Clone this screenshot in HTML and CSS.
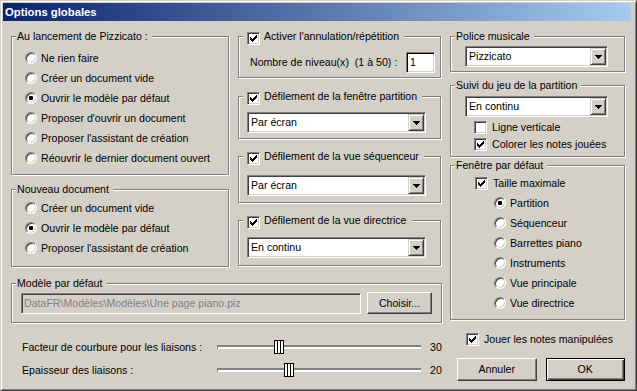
FILE: index.html
```html
<!DOCTYPE html>
<html lang="fr">
<head>
    <meta charset="UTF-8">
    <title>Options globales</title>
    <link rel="stylesheet" href="styles.css">
</head>
<body>
    <div class="window">
        <div class="titlebar">Options globales</div>
        <div class="client">
            <div class="left">
                <div class="cols">
                    <div class="col col-1">
                        <div class="group g-launch">
                            <div class="legend">Au lancement de Pizzicato :</div>
                            <div class="opt"><span class="radio"></span>Ne rien faire</div>
                            <div class="opt"><span class="radio"></span>Créer un document vide</div>
                            <div class="opt"><span class="radio on"></span>Ouvrir le modèle par défaut</div>
                            <div class="opt"><span class="radio"></span>Proposer d'ouvrir un document</div>
                            <div class="opt"><span class="radio"></span>Proposer l'assistant de création</div>
                            <div class="opt"><span class="radio"></span>Réouvrir le dernier document ouvert</div>
                        </div>
                        <div class="group g-new">
                            <div class="legend">Nouveau document</div>
                            <div class="opt"><span class="radio"></span>Créer un document vide</div>
                            <div class="opt"><span class="radio on"></span>Ouvrir le modèle par défaut</div>
                            <div class="opt"><span class="radio"></span>Proposer l'assistant de création</div>
                        </div>
                    </div>
                    <div class="col col-2">
                        <div class="group g-undo">
                            <div class="legend legend-check"><span class="check"><svg width="7" height="7" viewBox="0 0 7 7"><path d="M0 2h1v3H0z M1 3h1v3H1z M2 4h1v3H2z M3 3h1v3H3z M4 2h1v3H4z M5 1h1v3H5z M6 0h1v3H6z"/></svg></span>Activer l'annulation/répétition</div>
                            <div class="levels">
                                <span>Nombre de niveau(x)&nbsp; (1 à 50) :</span>
                                <span class="edit">1</span>
                            </div>
                        </div>
                        <div class="group g-scroll g-part">
                            <div class="legend legend-check"><span class="check"><svg width="7" height="7" viewBox="0 0 7 7"><path d="M0 2h1v3H0z M1 3h1v3H1z M2 4h1v3H2z M3 3h1v3H3z M4 2h1v3H4z M5 1h1v3H5z M6 0h1v3H6z"/></svg></span>Défilement de la fenêtre partition</div>
                            <div class="select wide">
                                <span class="select-text">Par écran</span>
                                <span class="select-btn"><svg width="7" height="4" viewBox="0 0 7 4"><path d="M0 0h7v1H0z M1 1h5v1H1z M2 2h3v1H2z M3 3h1v1H3z"/></svg></span>
                            </div>
                        </div>
                        <div class="group g-scroll g-seq">
                            <div class="legend legend-check"><span class="check"><svg width="7" height="7" viewBox="0 0 7 7"><path d="M0 2h1v3H0z M1 3h1v3H1z M2 4h1v3H2z M3 3h1v3H3z M4 2h1v3H4z M5 1h1v3H5z M6 0h1v3H6z"/></svg></span>Défilement de la vue séquenceur</div>
                            <div class="select wide">
                                <span class="select-text">Par écran</span>
                                <span class="select-btn"><svg width="7" height="4" viewBox="0 0 7 4"><path d="M0 0h7v1H0z M1 1h5v1H1z M2 2h3v1H2z M3 3h1v1H3z"/></svg></span>
                            </div>
                        </div>
                        <div class="group g-scroll g-dir">
                            <div class="legend legend-check"><span class="check"><svg width="7" height="7" viewBox="0 0 7 7"><path d="M0 2h1v3H0z M1 3h1v3H1z M2 4h1v3H2z M3 3h1v3H3z M4 2h1v3H4z M5 1h1v3H5z M6 0h1v3H6z"/></svg></span>Défilement de la vue directrice</div>
                            <div class="select wide">
                                <span class="select-text">En continu</span>
                                <span class="select-btn"><svg width="7" height="4" viewBox="0 0 7 4"><path d="M0 0h7v1H0z M1 1h5v1H1z M2 2h3v1H2z M3 3h1v1H3z"/></svg></span>
                            </div>
                        </div>
                    </div>
                </div>

                <div class="group g-model">
                    <div class="legend">Modèle par défaut</div>
                    <span class="path-field">DataFR\Modèles\Modèles\Une page piano.piz</span>
                    <span class="button choose">Choisir...</span>
                </div>

                <div class="sliders">
                    <div class="slider-row">
                        <span class="slider-label">Facteur de courbure pour les liaisons :</span>
                        <span class="track"><span class="thumb" style="left: 56px"></span></span>
                        <span class="slider-value">30</span>
                    </div>
                    <div class="slider-row">
                        <span class="slider-label">Epaisseur des liaisons :</span>
                        <span class="track"><span class="thumb" style="left: 66px"></span></span>
                        <span class="slider-value">20</span>
                    </div>
                </div>
            </div>

            <div class="right">
                <div class="group g-font">
                    <div class="legend">Police musicale</div>
                    <div class="select narrow">
                        <span class="select-text">Pizzicato</span>
                        <span class="select-btn"><svg width="7" height="4" viewBox="0 0 7 4"><path d="M0 0h7v1H0z M1 1h5v1H1z M2 2h3v1H2z M3 3h1v1H3z"/></svg></span>
                    </div>
                </div>
                <div class="group g-follow">
                    <div class="legend">Suivi du jeu de la partition</div>
                    <div class="select narrow">
                        <span class="select-text">En continu</span>
                        <span class="select-btn"><svg width="7" height="4" viewBox="0 0 7 4"><path d="M0 0h7v1H0z M1 1h5v1H1z M2 2h3v1H2z M3 3h1v1H3z"/></svg></span>
                    </div>
                    <div class="opt-check"><span class="check off"></span>Ligne verticale</div>
                    <div class="opt-check"><span class="check"><svg width="7" height="7" viewBox="0 0 7 7"><path d="M0 2h1v3H0z M1 3h1v3H1z M2 4h1v3H2z M3 3h1v3H3z M4 2h1v3H4z M5 1h1v3H5z M6 0h1v3H6z"/></svg></span>Colorer les notes jouées</div>
                </div>
                <div class="group g-window">
                    <div class="legend">Fenêtre par défaut</div>
                    <div class="opt-check"><span class="check"><svg width="7" height="7" viewBox="0 0 7 7"><path d="M0 2h1v3H0z M1 3h1v3H1z M2 4h1v3H2z M3 3h1v3H3z M4 2h1v3H4z M5 1h1v3H5z M6 0h1v3H6z"/></svg></span>Taille maximale</div>
                    <div class="views">
                        <div class="opt"><span class="radio on"></span>Partition</div>
                        <div class="opt"><span class="radio"></span>Séquenceur</div>
                        <div class="opt"><span class="radio"></span>Barrettes piano</div>
                        <div class="opt"><span class="radio"></span>Instruments</div>
                        <div class="opt"><span class="radio"></span>Vue principale</div>
                        <div class="opt"><span class="radio"></span>Vue directrice</div>
                    </div>
                </div>
                <div class="opt-check play"><span class="check"><svg width="7" height="7" viewBox="0 0 7 7"><path d="M0 2h1v3H0z M1 3h1v3H1z M2 4h1v3H2z M3 3h1v3H3z M4 2h1v3H4z M5 1h1v3H5z M6 0h1v3H6z"/></svg></span>Jouer les notes manipulées</div>
                <div class="buttons">
                    <span class="button">Annuler</span>
                    <span class="button default">OK</span>
                </div>
            </div>
        </div>
    </div>
</body>
</html>
```

FILE: styles.css
```css
* {
    box-sizing: border-box;
}
body {
    margin: 0;
    font-family: "Liberation Sans", Arial, sans-serif;
    font-size: 10.6px;
    line-height: 13px;
    color: #000;
    background: #d4d0c8;
}
.window {
    width: 637px;
    height: 391px;
    padding: 2px;
    background: #d4d0c8;
    border: 1px solid;
    border-color: #d4d0c8 #404040 #404040 #d4d0c8;
    box-shadow: inset 1px 1px #fff, inset -1px -1px #808080;
}
.titlebar {
    height: 18px;
    margin-right: 3px;
    padding-left: 2px;
    background: linear-gradient(to right, #0a246a, #a6caf0);
    color: #fff;
    font-weight: bold;
    font-size: 11.3px;
    line-height: 18px;
}
.client {
    display: flex;
    padding: 15px 0 0 8px;
}
.left {
    width: 431px;
}
.right {
    width: 175px;
    margin-left: 8px;
}
.cols {
    display: flex;
    gap: 9px;
    height: 231px;
}
.col-1 {
    width: 218px;
}
.col-2 {
    width: 203px;
}

/* group box with etched border */
.group {
    position: relative;
    border: 1px solid #808080;
    box-shadow: inset 1px 1px #fff, 1px 1px #fff;
}
.legend {
    position: absolute;
    top: -7px;
    left: 4px;
    padding: 0 4px 0 1px;
    background: #d4d0c8;
    white-space: nowrap;
}
.legend-check {
    display: flex;
    padding-left: 4px;
    padding-right: 5px;
}
.legend-check .check {
    margin-top: 2px;
    margin-right: 4px;
}

.g-launch {
    height: 139px;
    padding: 11px 0 0 13px;
}
.g-new {
    height: 78px;
    margin-top: 14px;
    padding: 8px 0 0 13px;
}
.g-undo {
    height: 42px;
    padding: 15px 5px 0 11px;
}
.g-scroll {
    padding-left: 8px;
}
.g-part {
    height: 43px;
    margin-top: 18px;
    padding-top: 15px;
}
.g-seq {
    height: 47px;
    margin-top: 17px;
    padding-top: 18px;
}
.g-dir {
    height: 46px;
    margin-top: 17px;
    padding-top: 16px;
}
.g-model {
    display: flex;
    align-items: flex-start;
    height: 40px;
    margin-top: 16px;
    padding: 9px 0 0 9px;
}
.g-font {
    height: 36px;
    padding: 9px 0 0 14px;
}
.g-follow {
    height: 72px;
    margin-top: 13px;
    padding: 10px 0 0 14px;
}
.g-window {
    height: 155px;
    margin-top: 8px;
    padding: 9px 0 0 24px;
}

/* radio buttons and check boxes */
.opt {
    display: flex;
    align-items: center;
    height: 20px;
    white-space: nowrap;
}
.radio {
    position: relative;
    width: 12px;
    height: 12px;
    margin-right: 4px;
    border-radius: 50%;
    border: 1px solid;
    border-color: #808080 #fff #fff #808080;
    background: #fff;
    box-shadow: inset 1px 1px #404040, inset -1px -1px #d4d0c8;
}
.radio.on::after {
    content: "";
    position: absolute;
    left: 3px;
    top: 3px;
    width: 4px;
    height: 4px;
    border-radius: 1px;
    background: #000;
}
.check {
    display: flex;
    align-items: center;
    justify-content: center;
    flex: none;
    width: 13px;
    height: 13px;
    border: 1px solid;
    border-color: #808080 #fff #fff #808080;
    background: #fff;
    box-shadow: inset 1px 1px #404040, inset -1px -1px #d4d0c8;
}
.check svg {
    display: block;
    shape-rendering: crispEdges;
}
.opt-check {
    display: flex;
    align-items: center;
    height: 17px;
    white-space: nowrap;
}
.opt-check .check {
    margin-right: 5px;
}
.g-follow .select {
    margin-bottom: 2px;
}
.g-follow .opt-check {
    padding-left: 9px;
}
.g-window .opt-check {
    height: 16px;
    margin-bottom: 2px;
}
.views {
    padding-left: 19px;
}
.play {
    height: 16px;
    margin-top: 11px;
    padding-left: 16px;
}

/* combo boxes and edits */
.select {
    display: flex;
    height: 21px;
    padding: 1px;
    border: 1px solid;
    border-color: #808080 #fff #fff #808080;
    background: #fff;
    box-shadow: inset 1px 1px #404040, inset -1px -1px #d4d0c8;
}
.select.wide {
    width: 179px;
}
.select.narrow {
    width: 143px;
}
.select-text {
    flex: 1;
    padding-left: 2px;
    line-height: 17px;
}
.select-btn {
    display: flex;
    align-items: center;
    justify-content: center;
    width: 16px;
    height: 17px;
    background: #d4d0c8;
    border: 1px solid;
    border-color: #d4d0c8 #404040 #404040 #d4d0c8;
    box-shadow: inset 1px 1px #fff, inset -1px -1px #808080;
}
.select-btn svg {
    display: block;
    shape-rendering: crispEdges;
}
.levels {
    display: flex;
    align-items: center;
    justify-content: space-between;
    height: 21px;
}
.edit {
    width: 29px;
    height: 21px;
    padding-left: 3px;
    line-height: 19px;
    border: 1px solid;
    border-color: #808080 #fff #fff #808080;
    background: #fff;
    box-shadow: inset 1px 1px #000, inset -1px -1px #d4d0c8;
}
.path-field {
    width: 340px;
    height: 21px;
    padding-left: 2px;
    line-height: 19px;
    color: #808080;
    border: 1px solid;
    border-color: #808080 #fff #fff #808080;
    box-shadow: inset 1px 1px #404040, inset -1px -1px #d4d0c8;
    white-space: nowrap;
}

/* push buttons */
.button {
    display: flex;
    align-items: center;
    justify-content: center;
    height: 23px;
    background: #d4d0c8;
    border: 1px solid;
    border-color: #fff #404040 #404040 #fff;
    box-shadow: inset -1px -1px #808080;
}
.button.default {
    border-color: #000;
    box-shadow: inset 1px 1px #fff, inset -1px -1px #404040, inset -2px -2px #808080;
}
.choose {
    width: 65px;
    height: 22px;
    margin: -1px 0 0 6px;
}
.buttons {
    display: flex;
    gap: 9px;
    margin-top: 11px;
    padding-left: 7px;
}
.buttons .button {
    width: 80px;
}

/* track bars */
.sliders {
    margin-top: 13px;
}
.slider-row {
    display: grid;
    grid-template-columns: 206px 204px auto;
    align-items: center;
    height: 23px;
}
.slider-label {
    padding-left: 11px;
    white-space: nowrap;
}
.track {
    position: relative;
    height: 4px;
    align-self: start;
    margin-top: 9px;
    border-left: 1px solid #808080;
    background: linear-gradient(#808080 0 2px, #fff 2px);
}
.thumb {
    position: absolute;
    top: -5px;
    width: 10px;
    height: 14px;
    border: 1px solid #000;
    background: linear-gradient(to right, #fff 0 2px, #000 2px 3px, #fff 3px 5px, #000 5px 6px, #fff 6px);
}
.slider-value {
    padding-left: 9px;
}
```
